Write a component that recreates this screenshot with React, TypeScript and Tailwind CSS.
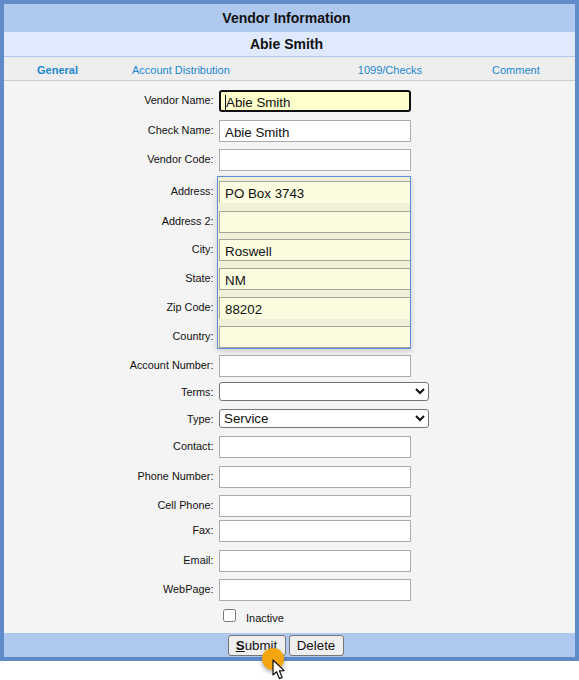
const labelCls = "w-[210px] h-[20px] shrink-0 pr-[0.5px] text-right text-[10.85px] leading-[20px] text-[#111]";
const inputCls = "block w-[192px] h-[22px] border border-[#a9abae] bg-white px-[5px] pt-[2px] text-[13.33px] leading-[18px] text-[#111] outline-none";

/* ---------------- Plain Row ---------------- */

const Row = ({ label, value, mt }: { label: string; value?: string; mt: string }) => (
  <div className={`flex ${mt}`}>
    <label className={labelCls}>{label}</label>
    <input readOnly value={value ?? ""} className={`${inputCls} ml-[5px]`} />
  </div>
);

const SelectRow = ({ label, value, mt }: { label: string; value: string; mt: string }) => (
  <div className={`flex ${mt}`}>
    <label className={labelCls}>{label}</label>
    <select
      defaultValue={value}
      className="ml-[5px] w-[210px] h-[19px] rounded-[3px] border border-[#767676] bg-white text-[13.33px] leading-[17px] text-[#111]"
    >
      <option value="">{""}</option>
      <option value="Service">Service</option>
    </select>
  </div>
);

/* ---------------- Address Block ---------------- */

const addressRows = [
  { label: "Address:", value: "PO Box 3743", mt: "mt-0", border: "border-b-transparent" },
  { label: "Address 2:", value: "", mt: "mt-[8px]", border: "" },
  { label: "City:", value: "Roswell", mt: "mt-[6px]", border: "" },
  { label: "State:", value: "NM", mt: "mt-[7px]", border: "" },
  { label: "Zip Code:", value: "88202", mt: "mt-[7px]", border: "border-b-transparent" },
  { label: "Country:", value: "", mt: "mt-[7px]", border: "" },
];

const AddressBlock = () => (
  <div className="flex mt-[5px]">
    <div className="w-[210px] shrink-0 pt-[5px] pr-[0.5px]">
      {addressRows.map((r) => (
        <div key={r.label} className={`h-[22px] text-right text-[10.85px] leading-[20px] text-[#111] ${r.mt}`}>
          {r.label}
        </div>
      ))}
    </div>
    <div className="ml-[3px] w-[194px] h-[173px] border border-[#5f8fd6] bg-[#f0f0d8] pl-[1px] pt-[4px] shadow-[0_2px_6px_rgba(0,0,0,0.18)]">
      {addressRows.map((r) => (
        <input
          key={r.label}
          readOnly
          value={r.value}
          className={`block w-full h-[22px] border border-r-0 border-[#a5a69a] bg-[#fbfbdf] px-[5px] pt-[2px] text-[13.33px] leading-[18px] text-[#111] outline-none ${r.mt} ${r.border}`}
        />
      ))}
    </div>
  </div>
);

/* ---------------- Page ---------------- */

export default function App() {
  return (
    <div className="w-[579px] h-[680px] bg-white relative overflow-hidden font-['Liberation_Sans',Arial,sans-serif]">
      <div className="h-[661px] border-4 border-[#5f8bc9] flex flex-col bg-[#f4f4f4]">
        <div className="h-[28px] shrink-0 bg-[#afc8ee] pr-[6px] text-center text-[14px] font-bold leading-[28px] text-[#111]">
          Vendor Information
        </div>
        <div className="h-[25px] shrink-0 border-b border-[#afc8ee] bg-[#dfeafe] pr-[6px] text-center text-[14px] font-bold leading-[24px] text-[#111]">
          Abie Smith
        </div>
        <div className="h-[24px] shrink-0 border-b border-[#cccccc] bg-[#eeeeee] flex items-center pt-[3px] text-[11px] text-[#1b87cf]">
          <span className="ml-[33px] font-semibold">General</span>
          <span className="ml-[54px]">Account Distribution</span>
          <span className="ml-[128px]">1099/Checks</span>
          <span className="ml-[70px]">Comment</span>
        </div>

        <div className="flex-1 flex flex-col">
          <div className="flex mt-[9px]">
            <label className={labelCls}>Vendor Name:</label>
            <div className="relative ml-[5px]">
              <input
                readOnly
                value="Abie Smith"
                className="block w-[192px] h-[22px] rounded-[3px] border-2 border-[#111] bg-[#ffffcc] px-[5px] pt-[2px] text-[13.33px] leading-[16px] text-[#111] outline-none"
              />
              {/* text caret */}
              <span className="absolute left-[6px] top-[5px] w-[1px] h-[15px] bg-[#111]" />
            </div>
          </div>
          <Row label="Check Name:" value="Abie Smith" mt="mt-[8px]" />
          <Row label="Vendor Code:" mt="mt-[7px]" />
          <AddressBlock />
          <Row label="Account Number:" mt="mt-[6px]" />
          <SelectRow label="Terms:" value="" mt="mt-[5px]" />
          <SelectRow label="Type:" value="Service" mt="mt-[7px]" />
          <Row label="Contact:" mt="mt-[7px]" />
          <Row label="Phone Number:" mt="mt-[8px]" />
          <Row label="Cell Phone:" mt="mt-[7px]" />
          <Row label="Fax:" mt="mt-[3px]" />
          <Row label="Email:" mt="mt-[8px]" />
          <Row label="WebPage:" mt="mt-[7px]" />
          <div className="flex items-start mt-[8px] h-[24px]">
            <span className="ml-[219px] block w-[13px] h-[13px] rounded-[2.5px] border border-[#767676] bg-white" />
            <span className="ml-[10px] mt-[3px] text-[11px] leading-[13px] text-[#111]">Inactive</span>
          </div>
        </div>

        <div className="h-[24px] shrink-0 bg-[#afc8ee] flex justify-center items-start pt-[2px] gap-[3px] pr-[8px]">
          <button className="w-[58px] h-[21px] rounded-[3px] border border-[#767676] bg-[#efefef] text-[13.33px] leading-[19px] text-[#111]">
            <span className="font-bold underline">S</span>ubmit
          </button>
          <button className="w-[55px] h-[21px] rounded-[3px] border border-[#767676] bg-[#efefef] text-[13.33px] leading-[19px] text-[#111]">
            Delete
          </button>
        </div>
      </div>

      {/* click marker + cursor */}
      <span className="absolute left-[262px] top-[648px] w-[22px] h-[22px] rounded-full bg-[#f5a50f] shadow-[0_2px_4px_rgba(0,0,0,0.35)]" />
      <svg className="absolute left-[272px] top-[659px]" width="16" height="22" viewBox="0 0 16 22">
        <path
          d="M1 1 L1 16 L4.6 12.8 L7.4 19.6 L10.2 18.4 L7.4 11.8 L12.2 11.6 Z"
          fill="#fff"
          stroke="#111"
          strokeWidth="1.2"
          strokeLinejoin="round"
        />
      </svg>
    </div>
  );
}
